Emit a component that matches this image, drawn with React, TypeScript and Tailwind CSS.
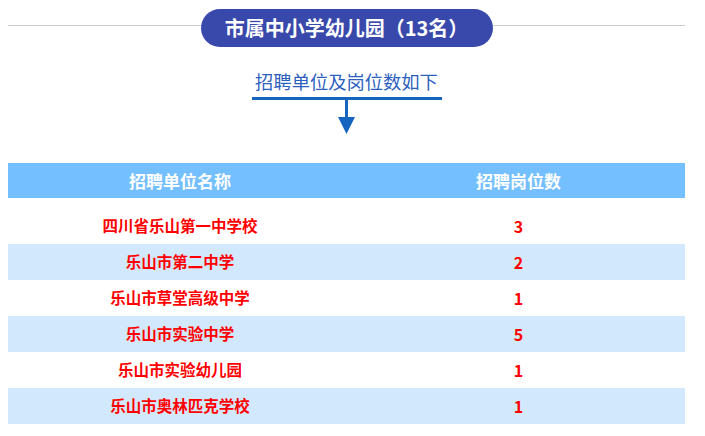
const rows = [
  { name: "四川省乐山第一中学校", count: 3 },
  { name: "乐山市第二中学", count: 2 },
  { name: "乐山市草堂高级中学", count: 1 },
  { name: "乐山市实验中学", count: 5 },
  { name: "乐山市实验幼儿园", count: 1 },
  { name: "乐山市奥林匹克学校", count: 1 },
];

export default function App() {
  return (
    <div className="w-[705px] h-[436px] bg-white overflow-hidden font-['Noto_Sans_CJK_SC',sans-serif]">
      <div className="ml-[8px] w-[677px] flex flex-col">
        {/* title pill over the gray rule */}
        <div className="relative h-[47px] flex justify-center">
          <div className="absolute left-0 right-0 top-[25px] h-px bg-[#cccccc]" />
          <div className="relative mt-[9px] h-[38px] w-[292px] rounded-full bg-[#3949ab] flex items-center justify-center text-white text-[20px] font-bold leading-none">
            市属中小学幼儿园（13名）
          </div>
        </div>

        {/* subtitle with arrow */}
        <div className="flex flex-col items-center">
          <div className="mt-[25px] text-[18.3px] leading-[18px] text-[#2d5fbf]">
            招聘单位及岗位数如下
          </div>
          <div className="mt-[7px] w-[190px] h-[3px] bg-[#1565c0]" />
          <div className="w-[3px] h-[17px] bg-[#1565c0]" />
          <svg width="17" height="17" viewBox="0 0 17 17" className="block">
            <polygon points="0,0 17,0 8.5,17" fill="#1565c0" />
          </svg>
        </div>

        {/* table */}
        <div className="mt-[29px] flex flex-col">
          <div className="h-[35px] flex items-center bg-[#74bfff] text-white font-bold text-[17px]">
            <div className="w-[344px] text-center">招聘单位名称</div>
            <div className="flex-1 text-center">招聘岗位数</div>
          </div>
          <div className="mt-[10px] flex flex-col">
            {rows.map((r, i) => (
              <div
                key={r.name}
                className={`h-[36px] flex items-center text-[#ff0000] font-bold ${
                  i % 2 === 1 ? "bg-[#d2e8fc]" : "bg-white"
                }`}
              >
                <div className="w-[344px] text-center text-[15.5px]">{r.name}</div>
                <div className="flex-1 text-center text-[16px]">{r.count}</div>
              </div>
            ))}
          </div>
        </div>
      </div>
    </div>
  );
}
